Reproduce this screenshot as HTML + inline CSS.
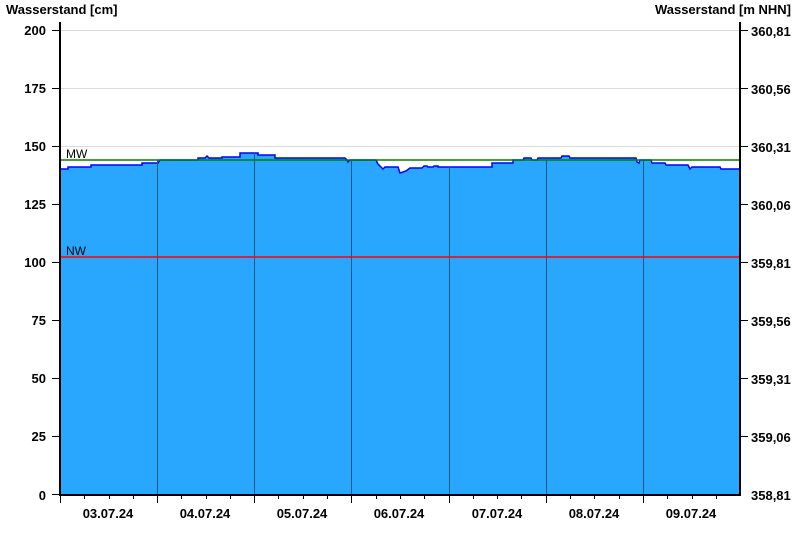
<!DOCTYPE html>
<html><head><style>
body{margin:0;background:#fff;}
svg{display:block;font-family:"Liberation Sans",sans-serif;}
</style></head><body>
<svg width="800" height="550" xmlns="http://www.w3.org/2000/svg">
<rect width="800" height="550" fill="#fff"/>
<g stroke="#dcdcdc" stroke-width="1">
<line x1="60" y1="30.5" x2="740" y2="30.5"/>
<line x1="60" y1="88.5" x2="740" y2="88.5"/>
<line x1="60" y1="146.5" x2="740" y2="146.5"/>
<line x1="60" y1="204.5" x2="740" y2="204.5"/>
</g>
<polygon fill="#29a7ff" stroke="none" points="60,169 68,169 68,167 91,167 91,165 142,165 142,163 158,163 160,160 198,160 198,158 205,158 207,156 209,158 222,158 222,157 240,157 240,153 258,153 258,155 275,155 275,158 345,158 347,160 348,162 350,160 376,160 378,164 383,169 385,167 398,167 400,173 403,172 406,171 410,168 422,168 424,166 427,166 428,167 433,167 434,166 438,166 438,167 492,167 492,163 513,163 513,160 523,160 524,158 531,158 532,160 537,160 538,158 561,158 562,156 569,156 570,158 636,158 637,162 639,163 640,160 651,160 652,163 665,163 666,165 688,165 690,169 692,167 720,167 721,169 740,169 740,495 60,495"/>
<polyline fill="none" stroke="#0000ff" stroke-width="1.5" points="60,169 68,169 68,167 91,167 91,165 142,165 142,163 158,163 160,160 198,160 198,158 205,158 207,156 209,158 222,158 222,157 240,157 240,153 258,153 258,155 275,155 275,158 345,158 347,160 348,162 350,160 376,160 378,164 383,169 385,167 398,167 400,173 403,172 406,171 410,168 422,168 424,166 427,166 428,167 433,167 434,166 438,166 438,167 492,167 492,163 513,163 513,160 523,160 524,158 531,158 532,160 537,160 538,158 561,158 562,156 569,156 570,158 636,158 637,162 639,163 640,160 651,160 652,163 665,163 666,165 688,165 690,169 692,167 720,167 721,169 740,169"/>
<g stroke="#1a5a80" stroke-width="1">
<line x1="157.5" y1="160" x2="157.5" y2="495"/>
<line x1="254.5" y1="153" x2="254.5" y2="495"/>
<line x1="351.5" y1="160" x2="351.5" y2="495"/>
<line x1="449.5" y1="167" x2="449.5" y2="495"/>
<line x1="546.5" y1="158" x2="546.5" y2="495"/>
<line x1="643.5" y1="160" x2="643.5" y2="495"/>
</g>
<line x1="60" y1="160" x2="740" y2="160" stroke="#008000" stroke-width="1.5"/>
<line x1="60" y1="257" x2="740" y2="257" stroke="#ff0000" stroke-width="1.5"/>
<text x="66" y="158" font-size="12" fill="#000">MW</text>
<text x="66" y="255" font-size="12" fill="#000">NW</text>
<g stroke="#000" stroke-width="2">
<line x1="60" y1="22" x2="60" y2="496"/>
<line x1="740" y1="22" x2="740" y2="496"/>
<line x1="59" y1="495" x2="741" y2="495"/>
</g>
<g stroke="#000" stroke-width="1">
<line x1="52" y1="30.5" x2="60" y2="30.5"/><line x1="52" y1="88.5" x2="60" y2="88.5"/><line x1="52" y1="146.5" x2="60" y2="146.5"/><line x1="52" y1="204.5" x2="60" y2="204.5"/><line x1="52" y1="262.5" x2="60" y2="262.5"/><line x1="52" y1="320.5" x2="60" y2="320.5"/><line x1="52" y1="378.5" x2="60" y2="378.5"/><line x1="52" y1="436.5" x2="60" y2="436.5"/><line x1="52" y1="494.5" x2="60" y2="494.5"/>
<line x1="740" y1="30.5" x2="748" y2="30.5"/><line x1="740" y1="88.5" x2="748" y2="88.5"/><line x1="740" y1="146.5" x2="748" y2="146.5"/><line x1="740" y1="204.5" x2="748" y2="204.5"/><line x1="740" y1="262.5" x2="748" y2="262.5"/><line x1="740" y1="320.5" x2="748" y2="320.5"/><line x1="740" y1="378.5" x2="748" y2="378.5"/><line x1="740" y1="436.5" x2="748" y2="436.5"/>
<line x1="60.5" y1="495" x2="60.5" y2="503"/><line x1="157.5" y1="495" x2="157.5" y2="503"/><line x1="254.5" y1="495" x2="254.5" y2="503"/><line x1="351.5" y1="495" x2="351.5" y2="503"/><line x1="449.5" y1="495" x2="449.5" y2="503"/><line x1="546.5" y1="495" x2="546.5" y2="503"/><line x1="643.5" y1="495" x2="643.5" y2="503"/>
<line x1="84.5" y1="495" x2="84.5" y2="499"/><line x1="109.5" y1="495" x2="109.5" y2="499"/><line x1="133.5" y1="495" x2="133.5" y2="499"/>
<line x1="181.5" y1="495" x2="181.5" y2="499"/><line x1="206.5" y1="495" x2="206.5" y2="499"/><line x1="230.5" y1="495" x2="230.5" y2="499"/>
<line x1="278.5" y1="495" x2="278.5" y2="499"/><line x1="303.5" y1="495" x2="303.5" y2="499"/><line x1="327.5" y1="495" x2="327.5" y2="499"/>
<line x1="376.5" y1="495" x2="376.5" y2="499"/><line x1="400.5" y1="495" x2="400.5" y2="499"/><line x1="424.5" y1="495" x2="424.5" y2="499"/>
<line x1="473.5" y1="495" x2="473.5" y2="499"/><line x1="497.5" y1="495" x2="497.5" y2="499"/><line x1="521.5" y1="495" x2="521.5" y2="499"/>
<line x1="570.5" y1="495" x2="570.5" y2="499"/><line x1="594.5" y1="495" x2="594.5" y2="499"/><line x1="619.5" y1="495" x2="619.5" y2="499"/>
<line x1="667.5" y1="495" x2="667.5" y2="499"/><line x1="692.5" y1="495" x2="692.5" y2="499"/><line x1="716.5" y1="495" x2="716.5" y2="499"/>
</g>
<g font-size="13" font-weight="bold" fill="#000">
<text x="6" y="14">Wasserstand [cm]</text>
<text x="791" y="14" text-anchor="end">Wasserstand [m NHN]</text>
<g text-anchor="end">
<text x="46" y="35">200</text><text x="46" y="93">175</text><text x="46" y="151">150</text><text x="46" y="209">125</text><text x="46" y="267">100</text><text x="46" y="325">75</text><text x="46" y="383">50</text><text x="46" y="441">25</text><text x="46" y="500">0</text>
</g>
<g>
<text x="751" y="36">360,81</text><text x="751" y="94">360,56</text><text x="751" y="152">360,31</text><text x="751" y="210">360,06</text><text x="751" y="268">359,81</text><text x="751" y="326">359,56</text><text x="751" y="384">359,31</text><text x="751" y="442">359,06</text><text x="751" y="500">358,81</text>
</g>
<g text-anchor="middle">
<text x="108" y="518">03.07.24</text><text x="205" y="518">04.07.24</text><text x="302" y="518">05.07.24</text><text x="399" y="518">06.07.24</text><text x="497" y="518">07.07.24</text><text x="594" y="518">08.07.24</text><text x="691" y="518">09.07.24</text>
</g>
</g>
</svg>
</body></html>
